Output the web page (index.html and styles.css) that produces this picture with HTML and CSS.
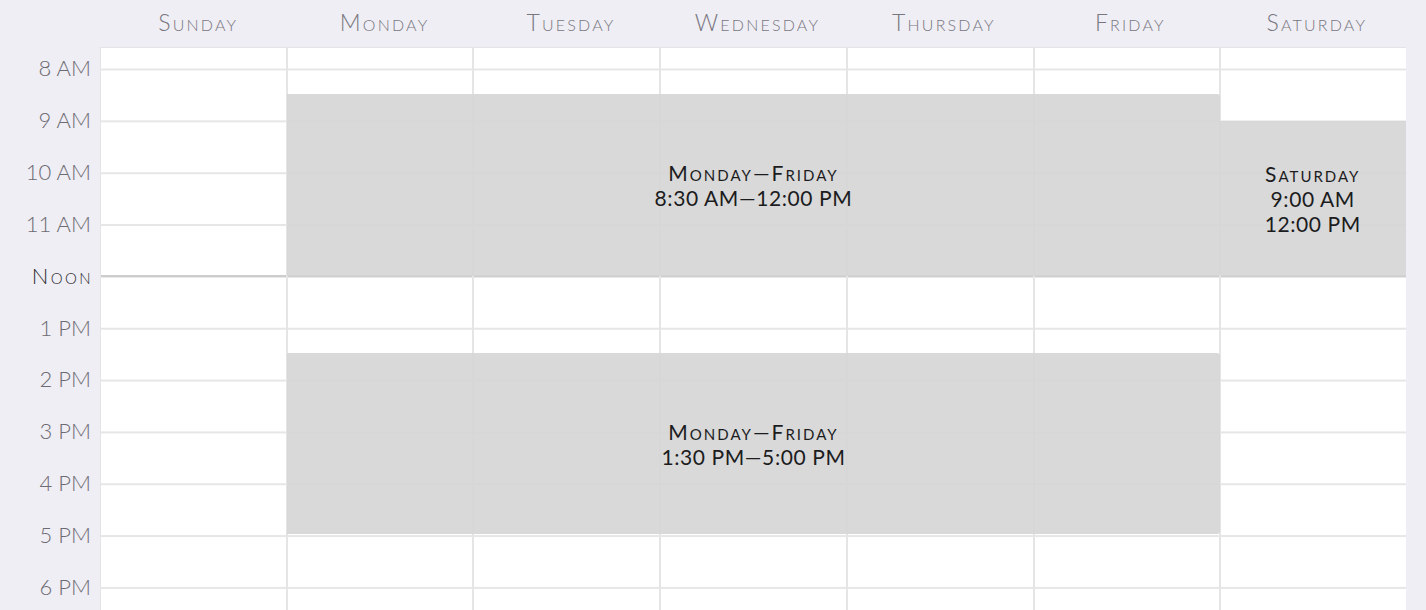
FILE: index.html
```html
<!DOCTYPE html>
<html>
<head>
<meta charset="utf-8">
<link rel="stylesheet" href="styles.css">
</head>
<body>
<div class="cal">
  <div class="head">
    <div class="corner"></div>
    <div class="day">Sunday</div>
    <div class="day">Monday</div>
    <div class="day">Tuesday</div>
    <div class="day">Wednesday</div>
    <div class="day">Thursday</div>
    <div class="day">Friday</div>
    <div class="day">Saturday</div>
  </div>
  <div class="body">
    <div class="times">
      <div class="time">8 AM</div>
      <div class="time">9 AM</div>
      <div class="time">10 AM</div>
      <div class="time">11 AM</div>
      <div class="time noon">Noon</div>
      <div class="time">1 PM</div>
      <div class="time">2 PM</div>
      <div class="time">3 PM</div>
      <div class="time">4 PM</div>
      <div class="time">5 PM</div>
      <div class="time">6 PM</div>
    </div>
    <div class="grid">
      <div class="col"></div>
      <div class="col"></div>
      <div class="col"></div>
      <div class="col"></div>
      <div class="col"></div>
      <div class="col"></div>
      <div class="col"></div>
      <div class="event weekday-am">
        <div class="ev-day">Monday—Friday</div>
        <div>8:30 AM—12:00 PM</div>
      </div>
      <div class="event saturday">
        <div class="ev-day">Saturday</div>
        <div>9:00 AM</div>
        <div>12:00 PM</div>
      </div>
      <div class="event weekday-pm">
        <div class="ev-day">Monday—Friday</div>
        <div>1:30 PM—5:00 PM</div>
      </div>
    </div>
  </div>
</div>
</body>
</html>
```
FILE: styles.css
```css
html, body {
  margin: 0;
  padding: 0;
  height: 610px;
  overflow: hidden;
  background: #efeef4;
}
body {
  font-family: Lato, "Open Sans", sans-serif;
}
.cal {
  width: 1406px;
}
.head {
  display: grid;
  grid-template-columns: 100px repeat(7, 1fr);
  height: 47px;
  align-items: center;
  padding-left: 1px;
  box-sizing: border-box;
}
.day {
  text-align: center;
  font-size: 23px;
  font-weight: 300;
  font-variant: small-caps;
  letter-spacing: 2.2px;
  color: #78767f;
  padding-left: 8px;
  padding-bottom: 4px;
}
.body {
  display: flex;
  height: 600px;
}
.times {
  width: 100px;
  flex: none;
  margin-top: -5px;
  display: flex;
  flex-direction: column;
}
.time {
  height: 51.85px;
  flex: none;
  display: flex;
  align-items: center;
  justify-content: flex-end;
  padding-right: 9px;
  font-size: 22px;
  font-weight: 300;
  color: #6c6a72;
}
.time.noon {
  font-variant: small-caps;
  letter-spacing: 2.4px;
  padding-right: 7px;
  color: #2a2a2e;
  font-weight: 300;
}
.grid {
  flex: 1;
  position: relative;
  display: flex;
  border-top: 1px solid #e4e4e6;
  border-left: 1px solid #e4e4e6;
  background-color: #fff;
  background-image:
    linear-gradient(#cdcdcd, #cdcdcd),
    linear-gradient(to bottom, #e6e6e6 0 2px, transparent 2px);
  background-size: 100% 2px, 100% 51.85px;
  background-position: 0 227.4px, 0 20.5px;
  background-repeat: no-repeat, repeat-y;
}
.col {
  flex: 1;
  box-sizing: border-box;
}
.col + .col {
  border-left: 2px solid #e5e5e5;
}
.event {
  position: absolute;
  background: rgba(213, 213, 213, 0.9);
  display: flex;
  flex-direction: column;
  align-items: center;
  justify-content: center;
  font-size: 21px;
  line-height: 25px;
  letter-spacing: 0.6px;
  color: #1c1c1e;
  border-radius: 0 3px 3px 0;
}
.ev-day {
  font-variant: small-caps;
  letter-spacing: 2px;
}
.weekday-am {
  left: calc(100% / 7);
  width: calc(500% / 7);
  top: 46px;
  height: 181.5px;
}
.weekday-pm {
  left: calc(100% / 7);
  width: calc(500% / 7);
  top: 305px;
  height: 181px;
}
.saturday {
  left: calc(600% / 7);
  right: 0;
  top: 72.5px;
  height: 155px;
  border-radius: 0;
}
```
